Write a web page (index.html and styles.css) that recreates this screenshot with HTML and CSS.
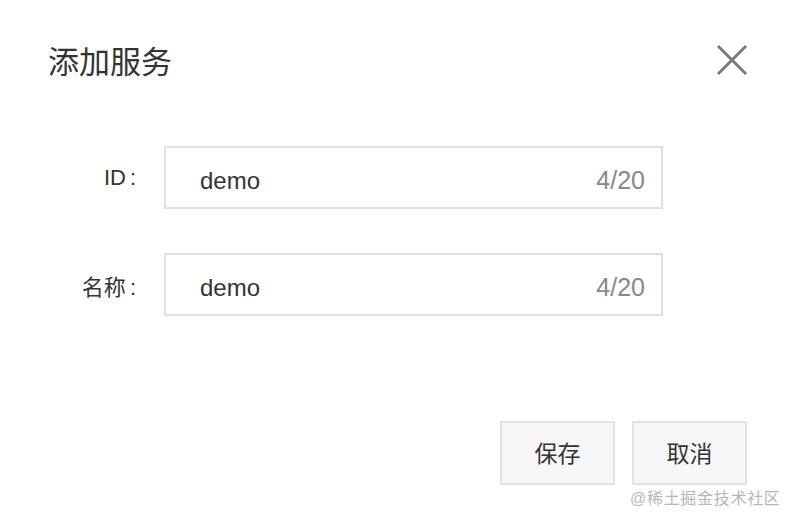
FILE: index.html
```html
<!DOCTYPE html>
<html lang="zh">
<head>
<meta charset="utf-8">
<link rel="stylesheet" href="styles.css">
</head>
<body>
<div class="dialog">
  <div class="header">
    <h1 class="title">添加服务</h1>
    <button class="close" aria-label="close">
      <svg width="32" height="32" viewBox="0 0 32 32"><path d="M2 2 L30 30 M30 2 L2 30" stroke="#7a7a7a" stroke-width="3" fill="none"/></svg>
    </button>
  </div>
  <div class="form">
    <div class="row">
      <label class="label">ID<span class="colon">:</span></label>
      <div class="input"><span class="value">demo</span><span class="count">4/20</span></div>
    </div>
    <div class="row">
      <label class="label">名称<span class="colon">:</span></label>
      <div class="input"><span class="value">demo</span><span class="count">4/20</span></div>
    </div>
  </div>
  <div class="footer">
    <button class="btn">保存</button>
    <button class="btn">取消</button>
  </div>
  <div class="watermark">@稀土掘金技术社区</div>
</div>
</body>
</html>
```
FILE: styles.css
```css
* { box-sizing: border-box; }
html, body { margin: 0; padding: 0; background: #fff; }
body {
  font-family: "Noto Sans CJK SC", "Noto Sans", sans-serif;
  color: #333;
  width: 796px;
  height: 520px;
  overflow: hidden;
}
.dialog {
  position: relative;
  width: 796px;
  height: 520px;
  padding: 38px 48px 0 48px;
}
.header {
  display: flex;
  justify-content: space-between;
  align-items: center;
  height: 44px;
}
.title {
  margin: 0;
  font-size: 31px;
  font-weight: 400;
  color: #333;
  line-height: 44px;
}
.close {
  border: 0;
  background: none;
  padding: 0;
  width: 32px;
  height: 32px;
  display: flex;
}
.form {
  margin-top: 64px;
  display: flex;
  flex-direction: column;
  gap: 44px;
}
.row {
  display: flex;
  align-items: center;
}
.label {
  width: 88px;
  text-align: right;
  font-size: 22px;
  color: #333;
  margin-right: 28px;
  font-family: "Liberation Sans", "Noto Sans CJK SC", sans-serif;
  white-space: nowrap;
}
.colon {
  margin-left: 4px;
}
.input {
  width: 499px;
  height: 63px;
  border: 2px solid #e0e0e0;
  display: flex;
  align-items: center;
  justify-content: space-between;
  padding: 6px 16px 0 34px;
  font-family: "Liberation Sans", "Noto Sans CJK SC", sans-serif;
}
.value {
  font-size: 24px;
  color: #333;
}
.count {
  font-size: 25px;
  color: #888;
}
.footer {
  position: absolute;
  left: 500px;
  top: 421px;
  display: flex;
  gap: 17px;
}
.btn {
  width: 115px;
  height: 64px;
  border: 2px solid #e2e2e2;
  background: #f7f7f7;
  font-family: "Noto Sans CJK SC", sans-serif;
  font-size: 23px;
  color: #333;
  padding: 0 0 3px 0;
}
.watermark {
  position: absolute;
  left: 630px;
  top: 485px;
  font-size: 16px;
  color: #b8b8b8;
  font-family: "Liberation Sans", "Noto Sans CJK SC", sans-serif;
  letter-spacing: 0.7px;
}
```
